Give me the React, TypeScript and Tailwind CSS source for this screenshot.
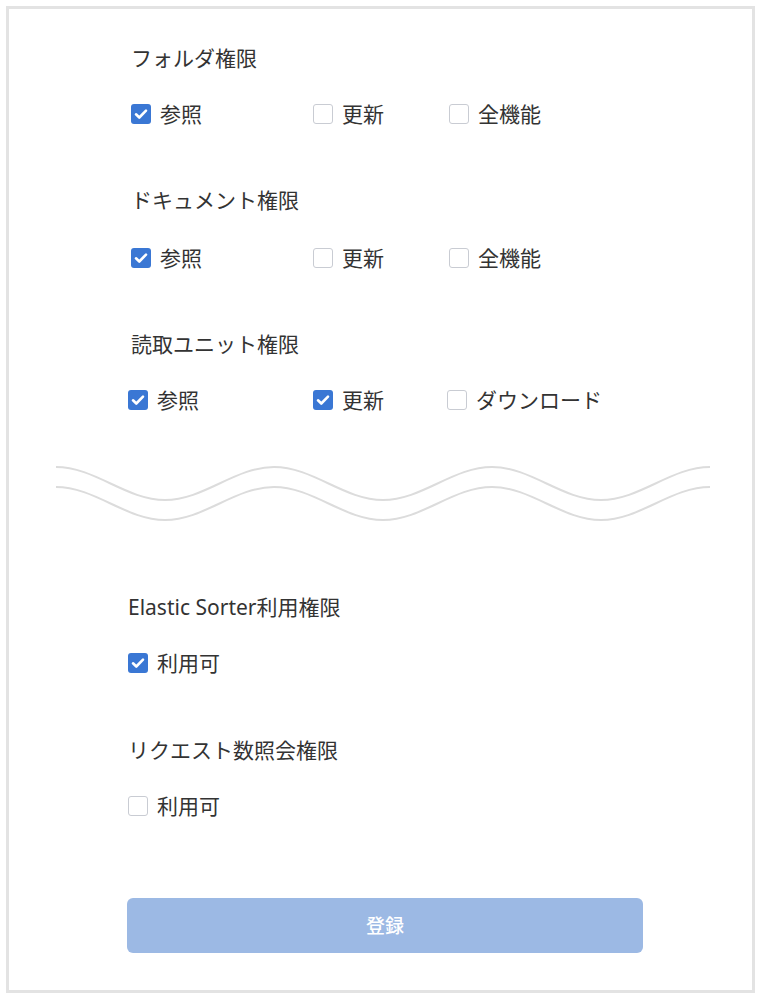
import React from 'react';

type Opt = { label: string; checked: boolean };

function Checkbox({ checked }: { checked: boolean }) {
  if (checked) {
    return (
      <span className="flex h-[20px] w-[20px] shrink-0 items-center justify-center rounded-[3px] bg-[#3a77d4]">
        <svg width="16" height="16" viewBox="0 0 16 16" fill="none">
          <path d="M3 8.3l3.3 3.2L13 4.6" stroke="#fff" strokeWidth={2.6} strokeLinecap="round" strokeLinejoin="round" />
        </svg>
      </span>
    );
  }
  return <span className="block h-[20px] w-[20px] shrink-0 rounded-[3px] border border-[#c9ccd3] bg-white" />;
}

function Option({ opt, width }: { opt: Opt; width?: string }) {
  return (
    <label className={`flex h-[28px] items-center gap-[9px] ${width ?? ''}`}>
      <Checkbox checked={opt.checked} />
      <span>{opt.label}</span>
    </label>
  );
}

function Wave() {
  const d = (o: number) =>
    `M0 ${5 + o} C39 ${5 + o} 70 ${38 + o} 109 ${38 + o} S179 ${5 + o} 218 ${5 + o} S288 ${38 + o} 327 ${38 + o} S397 ${5 + o} 436 ${5 + o} S506 ${38 + o} 545 ${38 + o} S615 ${5 + o} 654 ${5 + o}`;
  return (
    <svg className="ml-[47px] mt-[48px] block" width="654" height="60" viewBox="0 0 654 60" fill="none">
      <path d={d(0)} stroke="#dcdcdc" strokeWidth={2} />
      <path d={d(20)} stroke="#dcdcdc" strokeWidth={2} />
    </svg>
  );
}

export default function App() {
  return (
    <div
      className="min-h-screen bg-white pt-[6px] pl-[6px] text-[21px] text-[#333]"
      style={{ fontFamily: '"Noto Sans", "Noto Sans CJK JP", sans-serif' }}
    >
      <div className="flex h-[987px] w-[749px] flex-col border-[3px] border-[#e3e3e3] leading-[28px]">
        {/* フォルダ権限 */}
        <div className="ml-[122px] mt-[35px]">フォルダ権限</div>
        <div className="ml-[122px] mt-[28px] flex">
          <Option opt={{ label: '参照', checked: true }} width="w-[182px]" />
          <Option opt={{ label: '更新', checked: false }} width="w-[136px]" />
          <Option opt={{ label: '全機能', checked: false }} />
        </div>

        {/* ドキュメント権限 */}
        <div className="ml-[122px] mt-[58px]">ドキュメント権限</div>
        <div className="ml-[122px] mt-[30px] flex">
          <Option opt={{ label: '参照', checked: true }} width="w-[182px]" />
          <Option opt={{ label: '更新', checked: false }} width="w-[136px]" />
          <Option opt={{ label: '全機能', checked: false }} />
        </div>

        {/* 読取ユニット権限 */}
        <div className="ml-[122px] mt-[58px]">読取ユニット権限</div>
        <div className="ml-[119px] mt-[28px] flex">
          <Option opt={{ label: '参照', checked: true }} width="w-[185px]" />
          <Option opt={{ label: '更新', checked: true }} width="w-[134px]" />
          <Option opt={{ label: 'ダウンロード', checked: false }} />
        </div>

        <Wave />

        {/* Elastic Sorter */}
        <div className="ml-[119px] mt-[71px]">Elastic Sorter利用権限</div>
        <div className="ml-[119px] mt-[28px] flex">
          <Option opt={{ label: '利用可', checked: true }} />
        </div>

        {/* リクエスト数照会権限 */}
        <div className="ml-[119px] mt-[59px]">リクエスト数照会権限</div>
        <div className="ml-[119px] mt-[28px] flex">
          <Option opt={{ label: '利用可', checked: false }} />
        </div>

        <button
          type="button"
          className="ml-[118px] mt-[78px] flex h-[55px] w-[516px] items-center justify-center rounded-[6px] bg-[#9cb9e4] text-[19px] font-medium text-white"
        >
          登録
        </button>
      </div>
    </div>
  );
}
